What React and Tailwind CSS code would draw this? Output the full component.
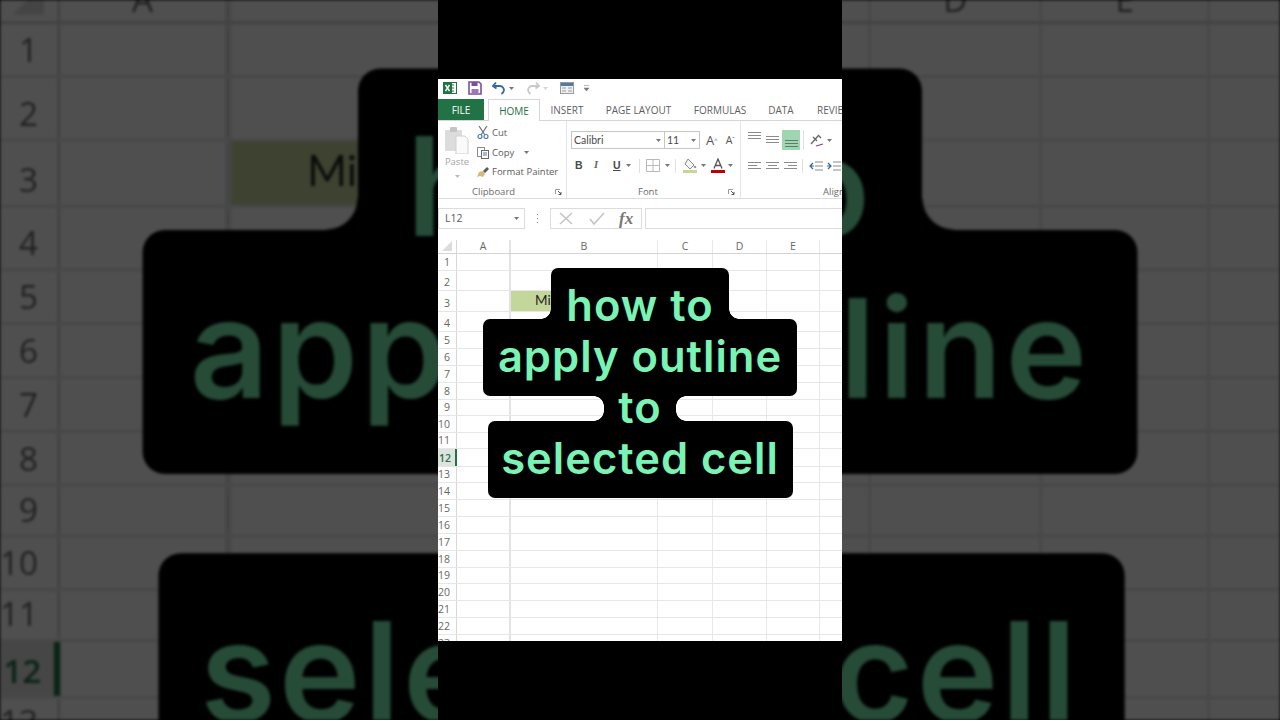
const ROW_HEIGHTS = [17,20,21,20,17,17,17,17,16,17,16,18,16,17,17,17,17,17,16,17,17,17,17];

function Caret({ className = "" }) {
  return (
    <svg width="5" height="3" viewBox="0 0 5 3" className={`shrink-0 ${className}`}>
      <path d="M0 0h5L2.5 3z" fill="#777" />
    </svg>
  );
}

function Lines({ widths, selected }) {
  return (
    <svg width="13" height="10" viewBox="0 0 13 10" className="shrink-0">
      {widths.map(([x, w, y], i) => (
        <rect key={i} x={x} y={y} width={w} height="1" fill={selected ? "#5b7d68" : "#8a8a8a"} />
      ))}
    </svg>
  );
}

function Launcher() {
  return (
    <svg width="7" height="6" viewBox="0 0 7 6" className="shrink-0">
      <path d="M.5 5V.5H5" fill="none" stroke="#9a9a9a" />
      <path d="M3 2l3 3M6 3v2.500H3.500" fill="none" stroke="#555" />
    </svg>
  );
}

function QuickAccess() {
  return (
    <div className="flex h-[20px] shrink-0 items-center pb-[2px] pl-[5px]">
      <svg width="14" height="14" viewBox="0 0 14 14" className="shrink-0">
        <rect x="5.500" y="1.500" width="8" height="11" fill="#fff" stroke="#217346" />
        <path d="M8 4h3M8 7h3M8 10h3" stroke="#217346" />
        <rect x="0" y="1" width="9" height="12" fill="#217346" />
        <path d="M2.500 4l4 6M6.500 4l-4 6" stroke="#fff" strokeWidth="1.400" />
      </svg>
      <svg width="14" height="14" viewBox="0 0 14 14" className="ml-[11px] shrink-0">
        <path d="M1 1h10l2 2v10H1z" fill="#fff" stroke="#7b4f9d" strokeWidth="1.600" />
        <rect x="3.500" y="1" width="6" height="4" fill="#7b4f9d" />
        <rect x="3.500" y="8" width="7" height="5" fill="#9c7ab5" />
      </svg>
      <svg width="14" height="14" viewBox="0 0 14 14" className="ml-[10px] shrink-0">
        <path d="M4 1.500L1 5l3.500 2.500M1.500 5H8a4 4 0 0 1 3 6.500l-1.500 1.500" fill="none" stroke="#34689f" strokeWidth="1.800" />
      </svg>
      <Caret className="ml-[3px]" />
      <svg width="14" height="14" viewBox="0 0 14 14" className="ml-[12px] shrink-0">
        <path d="M10 1.500L13 5l-3.500 2.500M12.500 5H6a4 4 0 0 0-3 6.500l1.500 1.500" fill="none" stroke="#c9c9c9" strokeWidth="1.800" />
      </svg>
      <Caret className="ml-[3px] opacity-30" />
      <svg width="14" height="12" viewBox="0 0 14 12" className="ml-[12px] shrink-0">
        <rect x=".5" y=".5" width="13" height="11" fill="#f0f0f0" stroke="#9a9a9a" />
        <rect x="1" y="1" width="12" height="3" fill="#4d7ba8" />
        <path d="M2 6h4M8 6h4M2 9h4M8 9h4" stroke="#9a9a9a" />
      </svg>
      <svg width="5" height="6" viewBox="0 0 5 6" className="ml-[10px] shrink-0">
        <path d="M0 .5h5M0 3h5l-2.500 3z" fill="#777" stroke="#777" strokeWidth=".5" />
      </svg>
    </div>
  );
}

function Tabs() {
  return (
    <div className="flex h-[22px] shrink-0 items-end border-b border-[#d6d6d6] text-[10px] leading-none text-[#5f5f5f]">
      <div className="flex h-[21px] w-[46px] shrink-0 items-center justify-center bg-[#217346] text-white">FILE</div>
      <div className="-mb-px ml-[4px] flex h-[22px] w-[52px] shrink-0 items-center justify-center border-x border-t border-[#d6d6d6] bg-white text-[#217346]">HOME</div>
      <div className="flex h-[21px] w-[54px] shrink-0 items-center justify-center">INSERT</div>
      <div className="flex h-[21px] w-[89px] shrink-0 items-center justify-center">PAGE LAYOUT</div>
      <div className="flex h-[21px] w-[74px] shrink-0 items-center justify-center">FORMULAS</div>
      <div className="flex h-[21px] w-[48px] shrink-0 items-center justify-center">DATA</div>
      <div className="flex h-[21px] shrink-0 items-center pl-[12px] whitespace-nowrap">REVIEW</div>
    </div>
  );
}

function Clipboard() {
  return (
    <div className="flex w-[129px] shrink-0 flex-col border-r border-[#e4e4e4]">
      <div className="flex h-[64px] text-[9.5px] leading-none text-[#5a5a5a]">
        <div className="ml-[7px] flex w-[24px] flex-col items-center pt-[6px]">
          <svg width="24" height="27" viewBox="0 0 24 27" className="shrink-0">
            <rect x="0" y="3" width="17" height="21" rx="1" fill="#dcdcdc" />
            <rect x="5" y="0" width="7" height="5" rx="1" fill="#c4c4c4" />
            <path d="M11 9h9l3 3v15H11z" fill="#fafafa" stroke="#d0d0d0" />
          </svg>
          <span className="mt-[3px] text-[#a5a5a5]">Paste</span>
          <Caret className="mt-[8px] opacity-50" />
        </div>
        <div className="ml-[8px] flex flex-col pt-[5px]">
          <div className="flex h-[13px] items-center gap-[3px]">
            <svg width="12" height="13" viewBox="0 0 12 13" className="shrink-0">
              <path d="M2 0l6 9M10 0L4 9" stroke="#707070" strokeWidth="1.200" />
              <circle cx="3" cy="10.500" r="2" fill="none" stroke="#4d7ba8" strokeWidth="1.200" />
              <circle cx="9" cy="10.500" r="2" fill="none" stroke="#4d7ba8" strokeWidth="1.200" />
            </svg>
            <span>Cut</span>
          </div>
          <div className="mt-[7px] flex h-[13px] items-center gap-[3px]">
            <svg width="12" height="12" viewBox="0 0 12 12" className="shrink-0">
              <rect x=".5" y=".5" width="7" height="9" fill="#fff" stroke="#8a8a8a" />
              <rect x="4.500" y="3.500" width="7" height="8" fill="#fff" stroke="#6b6b6b" />
              <path d="M6 6h4M6 8h4" stroke="#4d7ba8" />
            </svg>
            <span>Copy</span>
            <Caret className="ml-[7px]" />
          </div>
          <div className="mt-[6px] flex h-[13px] items-center gap-[3px]">
            <svg width="12" height="12" viewBox="0 0 12 12" className="shrink-0">
              <path d="M0 11l2-5 4-1 2 3-2 3-3-1z" fill="#d9b777" />
              <path d="M6 5l4-4 2 2-4 4z" fill="#5a5a5a" />
            </svg>
            <span className="whitespace-nowrap">Format Painter</span>
          </div>
        </div>
      </div>
      <div className="flex h-[14px] items-center pt-[2px] pl-[34px] pr-[4px] text-[9.5px] leading-none text-[#6a6a6a]">
        <span>Clipboard</span>
        <span className="ml-auto"><Launcher /></span>
      </div>
    </div>
  );
}

function Font() {
  return (
    <div className="flex w-[174px] shrink-0 flex-col border-r border-[#e4e4e4]">
      <div className="h-[64px] pt-[10px] pl-[4px] text-[10.5px] leading-none text-[#4a4a4a]">
        <div className="flex h-[18px] items-center">
          <div className="flex h-[18px] w-[94px] shrink-0 items-center justify-between border border-[#c6c6c6] pl-[2px] pr-[3px]" style={{ fontFamily: "Lato, sans-serif" }}>
            <span>Calibri</span>
            <Caret />
          </div>
          <div className="-ml-px flex h-[18px] w-[36px] shrink-0 items-center justify-between border border-[#c6c6c6] pl-[2px] pr-[3px]" style={{ fontFamily: "Lato, sans-serif" }}>
            <span>11</span>
            <Caret />
          </div>
          <span className="ml-[6px] text-[13px] text-[#555]">A<sup className="text-[6px]">^</sup></span>
          <span className="ml-[8px] text-[10.5px] text-[#555]">A<sup className="text-[6px]">ˇ</sup></span>
        </div>
        <div className="mt-[9px] flex h-[15px] items-center">
          <span className="ml-[4px] w-[8px] font-bold" style={{ fontFamily: "'Liberation Sans', sans-serif" }}>B</span>
          <span className="ml-[11px] w-[8px] font-bold italic text-[#666]" style={{ fontFamily: "'Liberation Serif', serif" }}>I</span>
          <span className="ml-[11px] w-[8px] font-bold underline" style={{ fontFamily: "'Liberation Sans', sans-serif" }}>U</span>
          <Caret className="ml-[5px]" />
          <span className="ml-[8px] h-[14px] w-px bg-[#e0e0e0]" />
          <svg width="14" height="13" viewBox="0 0 14 13" className="ml-[6px] shrink-0">
            <path d="M.5.5h13v12H.5zM7 .5v12M.5 6.500h13" fill="none" stroke="#b8b8b8" />
          </svg>
          <Caret className="ml-[5px]" />
          <span className="ml-[5px] h-[14px] w-px bg-[#e0e0e0]" />
          <svg width="14" height="15" viewBox="0 0 14 15" className="ml-[7px] shrink-0">
            <path d="M5 1l6 6-4 4-5-5z" fill="#f4f4f4" stroke="#8a8a8a" />
            <circle cx="12" cy="9" r="1.300" fill="#9a9a9a" />
            <rect x="0" y="12" width="14" height="3" fill="#c4d79b" />
          </svg>
          <Caret className="ml-[4px]" />
          <svg width="14" height="15" viewBox="0 0 14 15" className="ml-[5px] shrink-0">
            <path d="M3 10.500L7 1l4 9.500M4.500 7.500h5" fill="none" stroke="#555" strokeWidth="1.300" />
            <rect x="0" y="12" width="14" height="3" fill="#c00000" />
          </svg>
          <Caret className="ml-[3px]" />
        </div>
      </div>
      <div className="flex h-[14px] items-center pt-[2px] pl-[71px] pr-[5px] text-[9.5px] leading-none text-[#6a6a6a]">
        <span>Font</span>
        <span className="ml-auto"><Launcher /></span>
      </div>
    </div>
  );
}

function Alignment() {
  return (
    <div className="flex w-[120px] shrink-0 flex-col">
      <div className="h-[64px] pl-[7px] pt-[9px]">
        <div className="flex h-[20px] items-center">
          <span className="-mt-[7px]"><Lines widths={[[0, 13, 0], [0, 13, 3], [0, 13, 6]]} /></span>
          <span className="ml-[5px] -mt-px"><Lines widths={[[0, 13, 1], [0, 13, 4], [0, 13, 7]]} /></span>
          <span className="ml-[3px] flex h-[20px] w-[18px] items-end justify-center bg-[#9fd5b0] pb-[3px]">
            <Lines selected widths={[[0, 13, 3], [0, 13, 6], [0, 13, 9]]} />
          </span>
          <span className="ml-[3px] h-[20px] w-px bg-[#e0e0e0]" />
          <svg width="14" height="13" viewBox="0 0 14 13" className="ml-[6px] shrink-0">
            <path d="M1 10L8 2M3 3l4 4M8 1l3 3" fill="none" stroke="#666" strokeWidth="1.300" />
            <path d="M6 12l7-2" stroke="#7a4a8a" strokeWidth="1.300" />
          </svg>
          <Caret className="ml-[3px]" />
        </div>
        <div className="mt-[9px] flex h-[14px] items-center">
          <Lines widths={[[0, 13, 1], [0, 9, 4], [0, 13, 7]]} />
          <span className="ml-[5px]"><Lines widths={[[0, 13, 1], [2, 9, 4], [0, 13, 7]]} /></span>
          <span className="ml-[5px]"><Lines widths={[[0, 13, 1], [4, 9, 4], [0, 13, 7]]} /></span>
          <span className="ml-[5px] h-[14px] w-px bg-[#e0e0e0]" />
          <svg width="14" height="10" viewBox="0 0 14 10" className="ml-[6px] shrink-0">
            <path d="M6 1h8M6 5h8M6 9h8" stroke="#8a8a8a" />
            <path d="M4 2L1 5l3 3M1 5h4" fill="none" stroke="#34689f" strokeWidth="1.200" />
          </svg>
          <svg width="14" height="10" viewBox="0 0 14 10" className="ml-[4px] shrink-0">
            <path d="M6 1h8M6 5h8M6 9h8" stroke="#8a8a8a" />
            <path d="M1 2l3 3-3 3M0 5h4" fill="none" stroke="#34689f" strokeWidth="1.200" />
          </svg>
        </div>
      </div>
      <div className="flex h-[14px] items-center pt-[2px] pl-[82px] text-[9.5px] leading-none whitespace-nowrap text-[#6a6a6a]">Alignment</div>
    </div>
  );
}

function FormulaBar() {
  return (
    <div className="mt-[8px] flex h-[22px] shrink-0 items-center text-[10.5px] leading-none text-[#5a5a5a]">
      <div className="flex h-[21px] w-[87px] shrink-0 items-center justify-between border border-[#dcdcdc] pl-[6px] pr-[5px]">
        <span>L12</span>
        <Caret />
      </div>
      <svg width="3" height="9" viewBox="0 0 3 9" className="ml-[11px] shrink-0">
        <path d="M1 0h1v1H1zM1 4h1v1H1zM1 8h1v1H1z" fill="#888" />
      </svg>
      <div className="ml-[11px] flex h-[21px] w-[92px] shrink-0 items-center border border-[#dcdcdc]">
        <svg width="14" height="13" viewBox="0 0 14 13" className="ml-[8px] shrink-0">
          <path d="M1 1l12 11M13 1L1 12" stroke="#c4c4c4" strokeWidth="1.600" />
        </svg>
        <svg width="16" height="13" viewBox="0 0 16 13" className="ml-[16px] shrink-0">
          <path d="M1 7l4 5L15 1" fill="none" stroke="#c4c4c4" strokeWidth="1.600" />
        </svg>
        <span className="ml-[14px] text-[17px] font-bold italic text-[#777]" style={{ fontFamily: "'Liberation Serif', serif" }}>fx</span>
      </div>
      <div className="ml-[3px] h-[21px] w-[220px] shrink-0 border border-[#dcdcdc]" />
    </div>
  );
}

function ColumnHeader() {
  return (
    <div className="mt-[11px] flex h-[14px] shrink-0 border-b border-[#d4d4d4] text-[10.5px] leading-none text-[#666]">
      <div className="flex w-[19px] shrink-0 items-end justify-end border-r border-[#d8d8d8] pr-[4px] pb-[2px]">
        <svg width="10" height="10" viewBox="0 0 10 10"><path d="M10 0v10H0z" fill="#dcdcdc" /></svg>
      </div>
      <div className="flex w-[54px] shrink-0 items-center justify-center border-r-2 border-[#e2e2e2]">A</div>
      <div className="flex w-[147px] shrink-0 items-center justify-center border-r border-[#e8e8e8]">B</div>
      <div className="flex w-[55px] shrink-0 items-center justify-center border-r border-[#e8e8e8]">C</div>
      <div className="flex w-[54px] shrink-0 items-center justify-center border-r border-[#e8e8e8]">D</div>
      <div className="flex w-[53px] shrink-0 items-center justify-center border-r border-[#e8e8e8]">E</div>
    </div>
  );
}

function Row({ n, height }) {
  const selected = n === 12;
  return (
    <div className="flex shrink-0 border-b border-[#e6e6e6]" style={{ height }}>
      <div
        className={
          selected
            ? "flex w-[19px] shrink-0 items-end justify-end border-r-2 border-[#217346] bg-[#dfe3e0] pr-[4px] pb-[2.5px] text-[10.5px] leading-none font-semibold text-[#217346]"
            : "flex w-[19px] shrink-0 items-end justify-end border-r border-[#d8d8d8] pr-[6px] pb-[2.5px] text-[10.5px] leading-none text-[#666]"
        }
      >
        {n}
      </div>
      <div className="w-[54px] shrink-0 border-r-2 border-[#e2e2e2]" />
      {n === 3 ? (
        <div className="flex w-[147px] shrink-0 items-center bg-[#c4d79b] pl-[24px] text-[13.5px] leading-none text-[#222]" style={{ fontFamily: "Lato, sans-serif" }}>
          Mi
        </div>
      ) : (
        <div className="w-[147px] shrink-0 border-r border-[#e8e8e8]" />
      )}
      <div className="w-[55px] shrink-0 border-r border-[#e8e8e8]" />
      <div className="w-[54px] shrink-0 border-r border-[#e8e8e8]" />
      <div className="w-[53px] shrink-0 border-r border-[#e8e8e8]" />
    </div>
  );
}

function CaptionLine({ children, className, corners }) {
  return (
    <div className={`relative flex h-[77px] items-center justify-center rounded-[7px] bg-black pb-[2px] ${className}`}>
      {corners}
      <span className="relative z-10 whitespace-nowrap">{children}</span>
    </div>
  );
}

function Caption() {
  return (
    <div
      className="absolute top-[189px] left-0 flex w-full flex-col items-center text-[43.5px] leading-none font-semibold tracking-[1px] text-[#7af4b4]"
      style={{ fontFamily: "Inter, sans-serif" }}
    >
      <CaptionLine
        className="w-[178px]"
        corners={
          <>
            <span className="absolute top-[41px] left-[-10px] h-[10px] w-[10px] bg-[radial-gradient(circle_at_0%_0%,transparent_9.5px,black_10px)]" />
            <span className="absolute top-[41px] right-[-10px] h-[10px] w-[10px] bg-[radial-gradient(circle_at_100%_0%,transparent_9.5px,black_10px)]" />
          </>
        }
      >
        how to
      </CaptionLine>
      <CaptionLine className="-mt-[26px] w-[314px]">apply outline</CaptionLine>
      <CaptionLine
        className="-mt-[26px] w-[72px]"
        corners={
          <>
            <span className="absolute top-[26px] left-[-10px] h-[10px] w-[10px] bg-[radial-gradient(circle_at_0%_100%,transparent_9.5px,black_10px)]" />
            <span className="absolute top-[26px] right-[-10px] h-[10px] w-[10px] bg-[radial-gradient(circle_at_100%_100%,transparent_9.5px,black_10px)]" />
            <span className="absolute top-[41px] left-[-10px] h-[10px] w-[10px] bg-[radial-gradient(circle_at_0%_0%,transparent_9.5px,black_10px)]" />
            <span className="absolute top-[41px] right-[-10px] h-[10px] w-[10px] bg-[radial-gradient(circle_at_100%_0%,transparent_9.5px,black_10px)]" />
          </>
        }
      >
        to
      </CaptionLine>
      <CaptionLine className="-mt-[26px] w-[305px]">selected cell</CaptionLine>
    </div>
  );
}

function Frame() {
  return (
    <div className="relative flex h-[562px] w-[404px] shrink-0 flex-col overflow-hidden bg-white" style={{ fontFamily: "'Open Sans', sans-serif" }}>
      <QuickAccess />
      <Tabs />
      <div className="flex h-[78px] shrink-0 border-b border-[#dcdcdc] bg-white">
        <Clipboard />
        <Font />
        <Alignment />
      </div>
      <FormulaBar />
      <ColumnHeader />
      {ROW_HEIGHTS.map((h, i) => (
        <Row key={i} n={i + 1} height={h} />
      ))}
      <Caption />
    </div>
  );
}

export default function App() {
  return (
    <div className="relative h-[720px] w-[1280px] overflow-hidden bg-black">
      <div className="absolute inset-0 flex items-center justify-center overflow-hidden blur-[1.5px] brightness-[.31]">
        <div className="shrink-0 scale-[3.168]">
          <Frame />
        </div>
      </div>
      <div className="relative mx-auto flex h-full w-[404px] items-center bg-black">
        <Frame />
      </div>
    </div>
  );
}
